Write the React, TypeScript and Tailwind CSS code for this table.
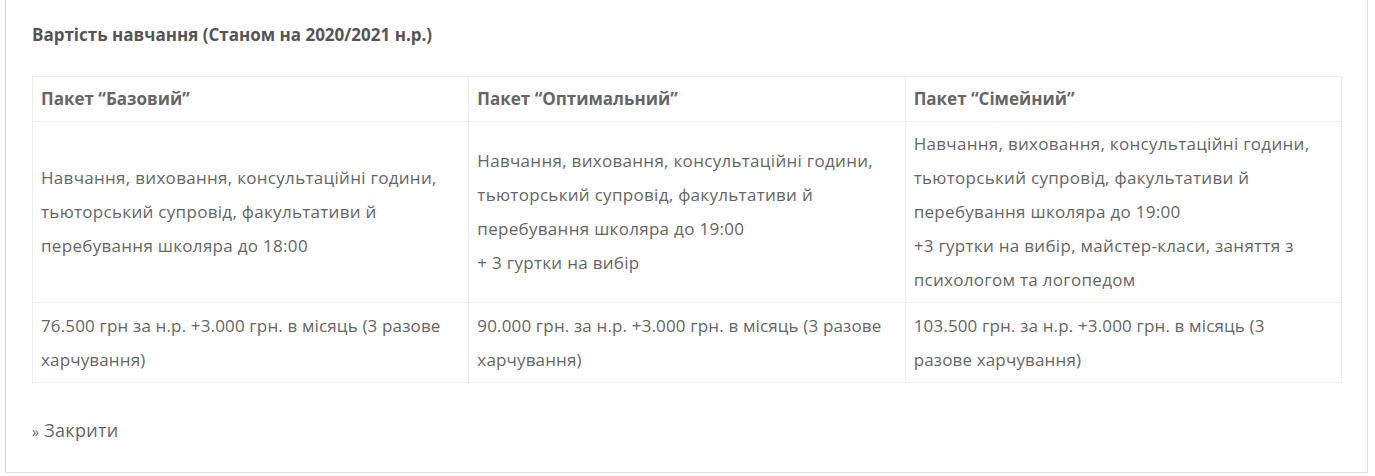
import { type FC } from "react";

const cellText = "px-[8px] py-[5px] align-middle border border-[#ededed] text-[17px] leading-[34px] text-[#666] whitespace-nowrap";

const packages = [
  {
    name: "Пакет “Базовий”",
    body: ["Навчання, виховання, консультаційні години,", "тьюторський супровід, факультативи й", "перебування школяра до 18:00"],
    price: ["76.500 грн за н.р. +3.000 грн. в місяць (3 разове", "харчування)"],
  },
  {
    name: "Пакет “Оптимальний”",
    body: [
      "Навчання, виховання, консультаційні години,",
      "тьюторський супровід, факультативи й",
      "перебування школяра до 19:00",
      "+ 3 гуртки на вибір",
    ],
    price: ["90.000 грн. за н.р. +3.000 грн. в місяць (3 разове", "харчування)"],
  },
  {
    name: "Пакет “Сімейний”",
    body: [
      "Навчання, виховання, консультаційні години,",
      "тьюторський супровід, факультативи й",
      "перебування школяра до 19:00",
      "+3 гуртки на вибір, майстер-класи, заняття з",
      "психологом та логопедом",
    ],
    price: ["103.500 грн. за н.р. +3.000 грн. в місяць (3", "разове харчування)"],
  },
];

const Lines: FC<{ lines: string[] }> = ({ lines }) => (
  <>
    {lines.map((line, i) => (
      <span key={i} className="block">
        {line}
      </span>
    ))}
  </>
);

const App: FC = () => {
  return (
    <div className="min-h-screen bg-white pl-[5px] pr-[7px]" style={{ fontFamily: '"Open Sans", sans-serif' }}>
      <div className="border-x border-b border-[#dcdcdc] bg-white px-[26px] pt-[21px] pb-[24px]">
        <h4 className="text-[17px] font-bold leading-[28px] text-[#555]">Вартість навчання (Станом на 2020/2021 н.р.)</h4>
        <table className="mt-[27px] w-[1310px] table-fixed border-collapse border border-[#e4e4e4]">
          <tbody>
            <tr>
              {packages.map((p) => (
                <td key={p.name} className={`${cellText} font-bold text-[#555]`}>
                  {p.name}
                </td>
              ))}
            </tr>
            <tr>
              {packages.map((p) => (
                <td key={p.name} className={`${cellText} tracking-[0.3px]`}>
                  <Lines lines={p.body} />
                </td>
              ))}
            </tr>
            <tr>
              {packages.map((p) => (
                <td key={p.name} className={`${cellText} h-[80px] tracking-[0.15px]`}>
                  <Lines lines={p.price} />
                </td>
              ))}
            </tr>
          </tbody>
        </table>
        <p className="mt-[31px] text-[18px] leading-[32px] tracking-[0.3px] text-[#666]">
          <span className="text-[14px]">»</span> Закрити
        </p>
      </div>
    </div>
  );
};

export default App;
